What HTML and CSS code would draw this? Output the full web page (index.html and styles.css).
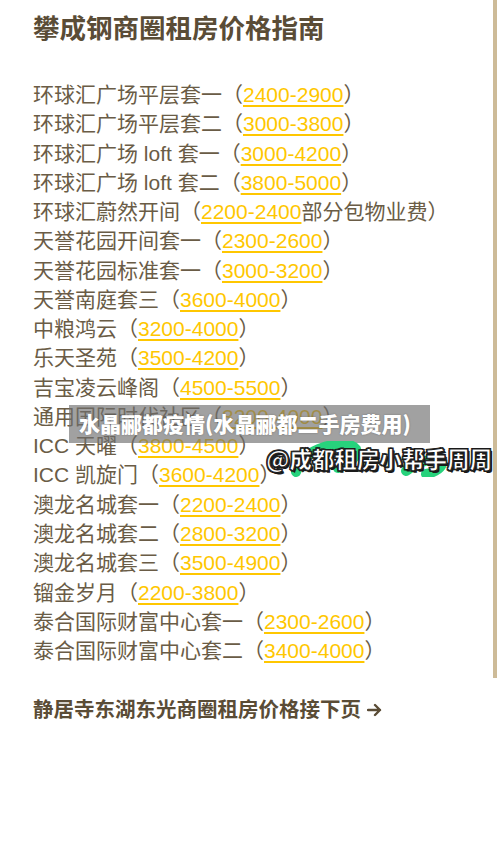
FILE: index.html
```html
<!DOCTYPE html>
<html lang="zh-CN">

<head>
    <meta charset="UTF-8">
    <meta name="viewport" content="width=device-width, initial-scale=1.0">
    <title>攀成钢商圈租房价格指南</title>
    <link rel="stylesheet" href="styles.css">
</head>

<body>

    <div class="page">
        <h1 class="title">攀成钢商圈租房价格指南</h1>

        <ul class="price-list">
            <li>环球汇广场平层套一（<span class="price">2400-2900</span>）</li>
            <li>环球汇广场平层套二（<span class="price">3000-3800</span>）</li>
            <li>环球汇广场 loft 套一（<span class="price">3000-4200</span>）</li>
            <li>环球汇广场 loft 套二（<span class="price">3800-5000</span>）</li>
            <li>环球汇蔚然开间（<span class="price">2200-2400</span>部分包物业费）</li>
            <li>天誉花园开间套一（<span class="price">2300-2600</span>）</li>
            <li>天誉花园标准套一（<span class="price">3000-3200</span>）</li>
            <li>天誉南庭套三（<span class="price">3600-4000</span>）</li>
            <li>中粮鸿云（<span class="price">3200-4000</span>）</li>
            <li>乐天圣苑（<span class="price">3500-4200</span>）</li>
            <li>吉宝凌云峰阁（<span class="price">4500-5500</span>）</li>
            <li>通用国际时代社区（<span class="price">3200-4000</span>）</li>
            <li>ICC 天曜（<span class="price">3800-4500</span>）</li>
            <li>ICC 凯旋门（<span class="price">3600-4200</span>）</li>
            <li>澳龙名城套一（<span class="price">2200-2400</span>）</li>
            <li>澳龙名城套二（<span class="price">2800-3200</span>）</li>
            <li>澳龙名城套三（<span class="price">3500-4900</span>）</li>
            <li>镏金岁月（<span class="price">2200-3800</span>）</li>
            <li>泰合国际财富中心套一（<span class="price">2300-2600</span>）</li>
            <li>泰合国际财富中心套二（<span class="price">3400-4000</span>）</li>
        </ul>

        <p class="next-page">静居寺东湖东光商圈租房价格接下页
            <svg class="arrow" width="15" height="14" viewBox="0 0 15 14">
                <path d="M1 7 H13 M8 2 L13 7 L8 12" fill="none" stroke="#5a4c36" stroke-width="2.4" stroke-linecap="round" stroke-linejoin="round" />
            </svg>
        </p>
    </div>

    <div class="scrollbar"></div>

    <div class="caption">水晶郦都疫情(水晶郦都二手房费用)</div>

    <div class="watermark">
        <svg class="marker" width="230" height="36" viewBox="0 0 230 36">
            <path d="M30 31 C 34 20, 44 10, 58 6 C 72 2, 86 2, 90 8 C 92 14, 86 22, 72 27" fill="none" stroke="#27d27c" stroke-width="10" stroke-linecap="round" />
            <path d="M140 30 C 150 22, 160 18, 172 18 C 180 20, 176 30, 160 33" fill="none" stroke="#27d27c" stroke-width="10" stroke-linecap="round" />
        </svg>
        <span class="handle">@成都租房小帮手周周</span>
    </div>

</body>

</html>
```

FILE: styles.css
```css
body {
    margin: 0;
    background-color: #ffffff;
    font-family: "Liberation Sans", "Noto Sans CJK SC", sans-serif;
    color: #6a5c46;
    width: 500px;
    height: 850px;
    overflow: hidden;
    position: relative;
}

.page {
    padding: 11px 0 0 33px;
}

.title {
    margin: 0;
    font-size: 26.5px;
    line-height: 36px;
    font-weight: bold;
    color: #5a4c36;
}

.price-list {
    list-style: none;
    margin: 33px 0 0 0;
    padding: 0;
}

.price-list li {
    font-size: 21px;
    line-height: 29.26px;
    white-space: nowrap;
}

.price {
    color: #ffc700;
    text-decoration: underline;
    text-decoration-color: #ffc700;
    text-decoration-thickness: 1.5px;
    text-underline-offset: 3px;
}

.next-page {
    margin: 30px 0 0 0;
    font-size: 20.5px;
    line-height: 29px;
    font-weight: bold;
    color: #5a4c36;
    display: flex;
    align-items: center;
    gap: 6px;
}

.scrollbar {
    position: absolute;
    top: 0;
    left: 493px;
    width: 4px;
    height: 678px;
    background-color: #cdbb98;
}

.caption {
    position: absolute;
    top: 405px;
    left: 69px;
    width: 361px;
    height: 38px;
    box-sizing: border-box;
    padding-left: 10px;
    background-color: rgba(110, 110, 110, 0.65);
    color: #ffffff;
    font-family: "Noto Sans CJK SC", sans-serif;
    font-size: 21px;
    font-weight: 900;
    line-height: 36px;
    white-space: nowrap;
    text-shadow: 0 0 2px rgba(0, 0, 0, 0.3);
}

.watermark {
    position: absolute;
    top: 441px;
    left: 266px;
    width: 230px;
    height: 36px;
}

.marker {
    position: absolute;
    top: 0;
    left: 0;
}

.handle {
    position: relative;
    display: block;
    font-family: "Noto Sans CJK SC", sans-serif;
    font-size: 22.5px;
    font-weight: 900;
    line-height: 34px;
    color: #ffffff;
    white-space: nowrap;
    -webkit-text-stroke: 1px #1a1a1a;
    text-shadow: 1px 1px 0 #1a1a1a, -1px 1px 0 #1a1a1a, 1px -1px 0 #1a1a1a, -1px -1px 0 #1a1a1a, 2px 2px 0 #1a1a1a;
}
```
